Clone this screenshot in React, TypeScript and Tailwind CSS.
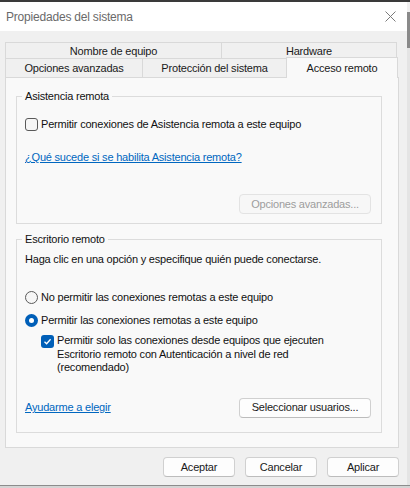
import React from 'react'

const font = { fontFamily: '"Liberation Sans", Arial, sans-serif' }

function Check({ checked }: { checked?: boolean }) {
  if (checked) {
    return (
      <div className="w-[13px] h-[13px] rounded-[3px] bg-[#005fb8] flex items-center justify-center shrink-0">
        <svg width="9" height="9" viewBox="0 0 9 9">
          <path d="M1.5 4.8 L3.6 6.8 L7.6 2.2" fill="none" stroke="#fff" strokeWidth="1.3" />
        </svg>
      </div>
    )
  }
  return <div className="w-[13px] h-[13px] rounded-[3px] border border-[#5a5a5a] bg-[#f6f6f6] shrink-0" />
}

function Radio({ checked }: { checked?: boolean }) {
  if (checked) {
    return (
      <div className="w-[13px] h-[13px] rounded-full bg-[#005fb8] flex items-center justify-center shrink-0">
        <div className="w-[5px] h-[5px] rounded-full bg-white" />
      </div>
    )
  }
  return <div className="w-[13px] h-[13px] rounded-full border border-[#5a5a5a] bg-[#f6f6f6] shrink-0" />
}

function Button({ label, width, disabled }: { label: string; width: string; disabled?: boolean }) {
  return (
    <div
      className={
        'h-[20px] rounded-[4px] border flex items-center justify-center ' +
        width +
        (disabled
          ? ' border-[#e3e3e3] bg-[#f7f7f7] text-[#9d9d9d]'
          : ' border-[#d0d0d0] border-b-[#bcbcbc] bg-[#fdfdfd] text-[#1a1a1a]')
      }
    >
      {label}
    </div>
  )
}

export default function App() {
  return (
    <div
      className="w-[410px] h-[488px] overflow-hidden bg-[#f0f0f0] text-[11px] tracking-[-0.2px] text-[#111]"
      style={font}
    >
      <div className="h-[2px] bg-[#3a3a3a]" />
      <div className="flex h-[483px]">
        <div className="w-[407px] flex flex-col">
          {/* title bar */}
          <div className="h-[29px] bg-white flex items-center justify-between pl-[6px] pr-[11px]">
            <span className="text-[12px] text-[#6a6a6a]">Propiedades del sistema</span>
            <svg width="11" height="11" viewBox="0 0 11 11">
              <path d="M0.5 0.5 L10.5 10.5 M10.5 0.5 L0.5 10.5" stroke="#7a7a7a" strokeWidth="1" />
            </svg>
          </div>

          <div className="flex-1 pt-[11px] pl-[5px]">
            {/* tabs */}
            <div className="flex h-[16px] text-[#1a1a1a]">
              <div className="w-[217px] border border-b-0 border-[#d9d9d9] flex items-end justify-center leading-[14px]">
                Nombre de equipo
              </div>
              <div className="w-[175px] border border-b-0 border-l-0 border-[#d9d9d9] flex items-end justify-center leading-[14px]">
                Hardware
              </div>
            </div>
            <div className="flex items-end h-[19px] text-[#1a1a1a]">
              <div className="w-[138px] h-[19px] border border-b-0 border-[#d9d9d9] flex items-center justify-center">
                Opciones avanzadas
              </div>
              <div className="w-[144px] h-[19px] border border-b-0 border-l-0 border-[#d9d9d9] flex items-center justify-center">
                Protección del sistema
              </div>
              <div className="relative z-10 w-[112px] h-[21px] -mb-px -ml-px border border-b-0 border-[#d9d9d9] bg-[#f9f9f9] flex items-start justify-center pt-[2px]">
                Acceso remoto
              </div>
            </div>

            {/* panel */}
            <div className="w-[394px] h-[371px] border border-[#d9d9d9] bg-[#f9f9f9] pl-[10px] pt-[11px]">
              <fieldset className="w-[366px] border border-[#dcdcdc] pl-[8px] pb-[9px]">
                <legend className="-ml-[3px] px-[3px] leading-[14px]">Asistencia remota</legend>
                <div className="flex items-center gap-[3px] h-[14px] mt-[14px]">
                  <Check />
                  <span>Permitir conexiones de Asistencia remota a este equipo</span>
                </div>
                <div className="h-[14px] mt-[19px] leading-[14px] text-[#0067c0] underline">
                  ¿Qué sucede si se habilita Asistencia remota?
                </div>
                <div className="flex justify-end pr-[10px] mt-[30px]">
                  <Button label="Opciones avanzadas..." width="w-[132px]" disabled />
                </div>
              </fieldset>

              <fieldset className="w-[366px] mt-[8px] border border-[#dcdcdc] pl-[8px] pb-[14px]">
                <legend className="-ml-[3px] px-[3px] leading-[14px]">Escritorio remoto</legend>
                <div className="h-[14px] leading-[14px] mt-[6px]">
                  Haga clic en una opción y especifique quién puede conectarse.
                </div>
                <div className="flex items-center gap-[3px] h-[14px] mt-[24px]">
                  <Radio />
                  <span>No permitir las conexiones remotas a este equipo</span>
                </div>
                <div className="flex items-center gap-[3px] h-[14px] mt-[9px]">
                  <Radio checked />
                  <span>Permitir las conexiones remotas a este equipo</span>
                </div>
                <div className="flex items-start gap-[3px] mt-[7px] pl-[16px]">
                  <div className="pt-[1px]">
                    <Check checked />
                  </div>
                  <span className="leading-[13.5px]">
                    Permitir solo las conexiones desde equipos que ejecuten
                    <br />
                    Escritorio remoto con Autenticación a nivel de red
                    <br />
                    (recomendado)
                  </span>
                </div>
                <div className="flex items-center justify-between pr-[10px] mt-[23px]">
                  <span className="text-[#0067c0] underline">Ayudarme a elegir</span>
                  <Button label="Seleccionar usuarios..." width="w-[132px]" />
                </div>
              </fieldset>
            </div>

            {/* footer buttons */}
            <div className="flex justify-end gap-[10px] pr-[8px] mt-[9px]">
              <Button label="Aceptar" width="w-[72px]" />
              <Button label="Cancelar" width="w-[72px]" />
              <Button label="Aplicar" width="w-[72px]" />
            </div>
          </div>
        </div>
        <div className="w-[3px] flex flex-col bg-[#e4e4e4]">
          <div className="h-[10px] bg-[#f0f0f0]" />
          <div className="h-[36px] bg-[#8a8a8a]" />
        </div>
      </div>
      <div className="h-[1px] bg-[#8c8c8c]" />
      <div className="h-[2px] bg-[#d4d4d4]" />
    </div>
  )
}
